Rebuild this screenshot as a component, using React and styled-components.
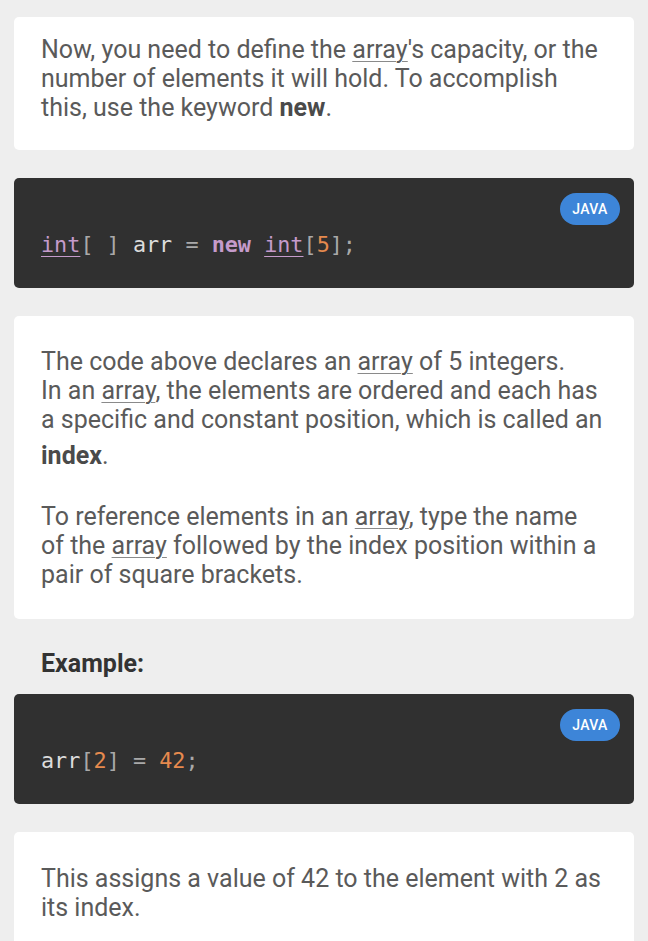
import React from "react";
import styled, { createGlobalStyle } from "styled-components";

const Global = createGlobalStyle`
  html, body { margin: 0; padding: 0; background: #eeeeee; }
  body { font-family: Roboto, "Noto Sans", Arial, sans-serif; -webkit-font-smoothing: antialiased; }
`;

const Page = styled.div`
  display: flex;
  flex-direction: column;
  padding: 17px 14px 0;
  gap: 28px;
`;

const Card = styled.div`
  background: #ffffff;
  border-radius: 5px;
  padding: ${(p) => p.$pad || "18px 29px 28px 27px"};
`;

const Text = styled.p`
  margin: 0;
  font-size: 25px;
  line-height: 29px;
  color: #5a5a5a;
  & + & { margin-top: 25px; }
`;

const Strong = styled.b`
  font-weight: 700;
  color: #4a4a4a;
  line-height: ${(p) => (p.$tall ? "43px" : "inherit")};
`;

const Term = styled.span`
  text-decoration: underline;
  text-decoration-color: #8a8a8a;
  text-decoration-thickness: 1px;
  text-underline-offset: 3px;
`;

const Heading = styled.h3`
  margin: 2px 0 -12px;
  padding-left: 27px;
  font-size: 25px;
  line-height: 29px;
  font-weight: 700;
  color: #333333;
`;

const CodeBlock = styled.div`
  background: #303030;
  border-radius: 5px;
  padding: 15px 14px 28px 27px;
  display: flex;
  flex-direction: column;
`;

const Badge = styled.span`
  align-self: flex-end;
  width: 60px;
  height: 32px;
  border-radius: 16px;
  background: #3d85d8;
  color: #ffffff;
  font-family: Roboto, Arial, sans-serif;
  font-weight: 500;
  font-size: 14px;
  display: flex;
  align-items: center;
  justify-content: center;
  letter-spacing: 0.3px;
`;

const Code = styled.pre`
  margin: 5px 0 0;
  font-family: "DejaVu Sans Mono", "Liberation Mono", monospace;
  font-size: 21.8px;
  line-height: 30px;
  color: #dcdcdc;
`;

const Tok = styled.span`
  color: ${(p) =>
    p.$k === "type" || p.$k === "kw"
      ? "#c59bcb"
      : p.$k === "num"
      ? "#e68a4e"
      : p.$k === "punct"
      ? "#a9a9a9"
      : "#dcdcdc"};
  ${(p) => (p.$k === "kw" ? "font-weight: 700;" : "")}
  ${(p) =>
    p.$k === "type"
      ? "text-decoration: underline; text-decoration-thickness: 1px; text-underline-offset: 4px;"
      : ""}
`;

const NextCard = styled.div`
  background: #ffffff;
  border-radius: 5px 5px 0 0;
  height: 60px;
  margin-top: -25px;
  box-shadow: 0 -2px 5px rgba(0, 0, 0, 0.08);
`;

export default function App() {
  return (
    <>
      <Global />
      <Page>
        <Card>
          <Text>
            Now, you need to define the <Term>array</Term>'s capacity, or the
            number of elements it will hold. To accomplish this, use the keyword{" "}
            <Strong>new</Strong>.
          </Text>
        </Card>

        <CodeBlock>
          <Badge>JAVA</Badge>
          <Code>
            <Tok $k="type">int</Tok>
            <Tok $k="punct">[ ]</Tok> <Tok>arr</Tok> <Tok $k="punct">=</Tok>{" "}
            <Tok $k="kw">new</Tok> <Tok $k="type">int</Tok>
            <Tok $k="punct">[</Tok>
            <Tok $k="num">5</Tok>
            <Tok $k="punct">];</Tok>
          </Code>
        </CodeBlock>

        <Card $pad="31px 29px 30px 27px">
          <Text>
            The code above declares an <Term>array</Term> of 5 integers.
            <br />
            In an <Term>array</Term>, the elements are ordered and each has a
            specific and constant position, which is called an{" "}
            <Strong $tall>index</Strong>.
          </Text>
          <Text>
            To reference elements in an <Term>array</Term>, type the name of the{" "}
            <Term>array</Term> followed by the index position within a pair of
            square brackets.
          </Text>
        </Card>

        <Heading>Example:</Heading>

        <CodeBlock>
          <Badge>JAVA</Badge>
          <Code>
            <Tok>arr</Tok>
            <Tok $k="punct">[</Tok>
            <Tok $k="num">2</Tok>
            <Tok $k="punct">]</Tok> <Tok $k="punct">=</Tok>{" "}
            <Tok $k="num">42</Tok>
            <Tok $k="punct">;</Tok>
          </Code>
        </CodeBlock>

        <Card $pad="32px 29px 32px 27px">
          <Text>
            This assigns a value of 42 to the element with 2 as its index.
          </Text>
        </Card>
        <NextCard />
      </Page>
    </>
  );
}
